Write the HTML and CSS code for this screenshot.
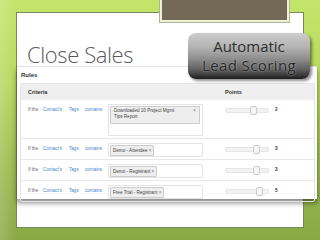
FILE: index.html
```html
<!DOCTYPE html>
<html lang="en">
<head>
    <meta charset="UTF-8">
    <title>Close Sales</title>
    <link rel="stylesheet" href="styles.css">
</head>
<body>
    <div class="photo"></div>

    <div class="slide">
        <div class="title">Close Sales</div>

        <div class="shot">
            <div class="rules-label">Rules</div>
            <div class="table">
                <div class="head">
                    <div class="col-criteria">Criteria</div>
                    <div class="col-points">Points</div>
                </div>

                <div class="row tall">
                    <div class="col-criteria">
                        <span class="w-if">If the</span>
                        <span class="link w-contact">Contact's</span>
                        <span class="link w-tags">Tags</span>
                        <span class="link w-contains">contains</span>
                        <div class="input big">
                            <span class="chip wide">Downloaded 10 Project Mgmt<br>Tips Report<i>×</i></span>
                        </div>
                    </div>
                    <div class="col-points">
                        <div class="track"><div class="thumb" style="left: 58%"></div></div>
                        <span class="num">2</span>
                    </div>
                </div>

                <div class="row">
                    <div class="col-criteria">
                        <span class="w-if">If the</span>
                        <span class="link w-contact">Contact's</span>
                        <span class="link w-tags">Tags</span>
                        <span class="link w-contains">contains</span>
                        <div class="input">
                            <span class="chip">Demo - Attendee <i>×</i></span>
                        </div>
                    </div>
                    <div class="col-points">
                        <div class="track"><div class="thumb" style="left: 64%"></div></div>
                        <span class="num">3</span>
                    </div>
                </div>

                <div class="row">
                    <div class="col-criteria">
                        <span class="w-if">If the</span>
                        <span class="link w-contact">Contact's</span>
                        <span class="link w-tags">Tags</span>
                        <span class="link w-contains">contains</span>
                        <div class="input">
                            <span class="chip">Demo - Registrant <i>×</i></span>
                        </div>
                    </div>
                    <div class="col-points">
                        <div class="track"><div class="thumb" style="left: 64%"></div></div>
                        <span class="num">3</span>
                    </div>
                </div>

                <div class="row">
                    <div class="col-criteria">
                        <span class="w-if">If the</span>
                        <span class="link w-contact">Contact's</span>
                        <span class="link w-tags">Tags</span>
                        <span class="link w-contains">contains</span>
                        <div class="input">
                            <span class="chip">Free Trial - Registrant <i>×</i></span>
                        </div>
                    </div>
                    <div class="col-points">
                        <div class="track"><div class="thumb" style="left: 72%"></div></div>
                        <span class="num">5</span>
                    </div>
                </div>
            </div>
        </div>
    </div>

    <div class="badge">
        <span class="badge-top">Automatic</span><br>
        <span class="badge-bottom">Lead Scoring</span>
    </div>
</body>
</html>
```

FILE: styles.css
```css
body{
    margin: 0;
    width: 320px;
    height: 240px;
    overflow: hidden;
    position: relative;
    font-family: "Liberation Sans", Arial, sans-serif;
    background:
        linear-gradient(90deg, rgba(255,255,255,0.18) 0, rgba(255,255,255,0) 16px),
        linear-gradient(180deg, #c3e56a 0%, #b4d85c 35%, #98ba4c 70%, #89a945 100%);
}

.photo{
    position: absolute;
    left: 160px;
    top: -2px;
    width: 125px;
    height: 20px;
    background: #736957;
    border: 2px solid #f1eedc;
    box-shadow: 0 0 0 1px #a9b88a;
}

.slide{
    margin: 12px 0 0 16px;
    width: 286px;
    height: 214px;
    background: #ffffff;
    border: 1px solid #76875a;
}

.title{
    height: 23px;
    padding: 30px 0 0 10px;
    font-family: "Open Sans", sans-serif;
    font-weight: 300;
    font-size: 22px;
    line-height: 22px;
    letter-spacing: -0.4px;
    color: #5a5a5a;
}

.shot{
    margin-right: -14px;
    height: 132px;
    background: #ffffff;
    border-top: 1px solid #e6e6e6;
    box-shadow: 0 4px 5px rgba(0,0,0,0.45);
}

.rules-label{
    height: 16px;
    padding-left: 4px;
    font-size: 6px;
    font-weight: bold;
    line-height: 16px;
    color: #333333;
}

.table{
    margin: 0 2px 0 3px;
    border: 1px solid #e3e3e3;
    border-radius: 2px;
}

.head{
    display: flex;
    height: 16px;
    background: #efefef;
    font-size: 5.5px;
    font-weight: bold;
    line-height: 16px;
    color: #333333;
}

.col-criteria{
    width: 197px;
    padding-left: 7px;
    display: flex;
    align-items: flex-start;
}

.col-points{
    display: flex;
    align-items: flex-start;
    gap: 6px;
}

.row{
    display: flex;
    height: 12px;
    padding: 4px 0;
    border-top: 1px solid #e8e8e8;
    font-size: 4.6px;
    line-height: 12px;
    color: #666666;
}

.row.tall{
    height: 30px;
    padding: 4px 0 4px;
    border-top: none;
}

.w-if{ width: 15px; }
.w-contact{ width: 26px; }
.w-tags{ width: 16px; }
.w-contains{ width: 23px; }

.link{
    color: #4586cb;
}

.input{
    width: 91px;
    height: 10px;
    border: 1px solid #e4e4e4;
    border-radius: 1px;
    padding: 1px;
    display: flex;
    align-items: flex-start;
}

.input.big{
    height: 28px;
}

.chip{
    position: relative;
    display: inline-block;
    padding: 0 2px;
    height: 9px;
    line-height: 9px;
    background: #eeeeee;
    border: 1px solid #cccccc;
    border-radius: 1px;
    color: #444444;
    white-space: nowrap;
}

.chip i{
    font-style: normal;
    color: #777777;
}

.chip.wide{
    width: 82px;
    height: 14px;
    padding: 1px 3px;
    line-height: 6px;
}

.chip.wide i{
    position: absolute;
    right: 3px;
    top: 1px;
}

.track{
    position: relative;
    width: 42px;
    height: 3px;
    margin-top: 4px;
    background: #f2f2f2;
    border: 1px solid #e6e6e6;
    border-radius: 2px;
}

.thumb{
    position: absolute;
    top: -3px;
    width: 5px;
    height: 7px;
    background: #f6f6f6;
    border: 1px solid #cccccc;
    border-radius: 2px;
}

.num{
    font-weight: bold;
    color: #333333;
}

.badge{
    position: absolute;
    left: 188px;
    top: 33px;
    width: 122px;
    height: 46px;
    border-radius: 8px;
    background: linear-gradient(180deg, #cccccc 0%, #b4b4b4 30%, #909090 55%, #5e5e5e 80%, #1e1e1e 100%);
    box-shadow: 2px 2px 3px rgba(0,0,0,0.45);
    font-family: "Open Sans", sans-serif;
    font-weight: 400;
    font-size: 15px;
    line-height: 19px;
    text-align: center;
    padding-top: 4px;
    box-sizing: border-box;
    color: #2e2e2e;
}

.badge-bottom{
    letter-spacing: 0.4px;
    color: #262626;
    text-shadow: 0 0 2px rgba(255,255,255,0.55);
}
```
